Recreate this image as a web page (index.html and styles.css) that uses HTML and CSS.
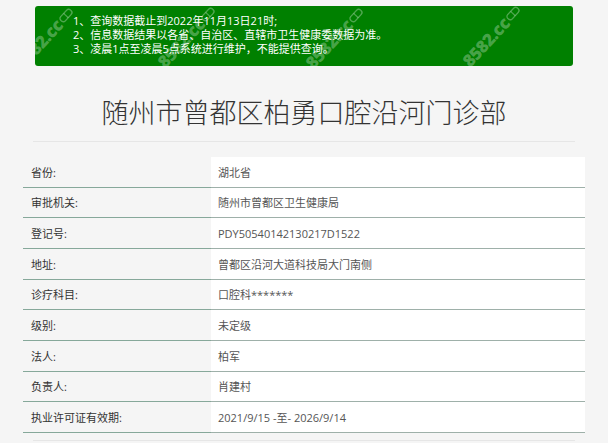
FILE: index.html
```html
<!DOCTYPE html>
<html lang="zh-CN">
<head>
<meta charset="utf-8">
<title>随州市曾都区柏勇口腔沿河门诊部</title>
<link rel="stylesheet" href="styles.css">
</head>
<body>
<div class="page">
  <div class="notice">
    <p>1、查询数据截止到2022年11月13日21时;</p>
    <p>2、信息数据结果以各省、自治区、直辖市卫生健康委数据为准。</p>
    <p>3、凌晨1点至凌晨5点系统进行维护，不能提供查询。</p>
    <span class="wm wm1">8582.cc<svg class="pill" viewBox="0 0 20 10" width="16" height="8"><rect x="1" y="1" width="18" height="8" rx="4" fill="none" stroke="currentColor" stroke-width="1.8"/><line x1="10" y1="1" x2="10" y2="9" stroke="currentColor" stroke-width="1.6"/></svg></span>
    <span class="wm wm2">8582.cc<svg class="pill" viewBox="0 0 20 10" width="16" height="8"><rect x="1" y="1" width="18" height="8" rx="4" fill="none" stroke="currentColor" stroke-width="1.8"/><line x1="10" y1="1" x2="10" y2="9" stroke="currentColor" stroke-width="1.6"/></svg></span>
    <span class="wm wm3">8582.cc<svg class="pill" viewBox="0 0 20 10" width="16" height="8"><rect x="1" y="1" width="18" height="8" rx="4" fill="none" stroke="currentColor" stroke-width="1.8"/><line x1="10" y1="1" x2="10" y2="9" stroke="currentColor" stroke-width="1.6"/></svg></span>
    <span class="wm wm4">8582.cc<svg class="pill" viewBox="0 0 20 10" width="16" height="8"><rect x="1" y="1" width="18" height="8" rx="4" fill="none" stroke="currentColor" stroke-width="1.8"/><line x1="10" y1="1" x2="10" y2="9" stroke="currentColor" stroke-width="1.6"/></svg></span>
  </div>

  <h1 class="title">随州市曾都区柏勇口腔沿河门诊部</h1>

  <div class="info">
    <div class="row"><div class="label">省份:</div><div class="value">湖北省</div></div>
    <div class="row"><div class="label">审批机关:</div><div class="value">随州市曾都区卫生健康局</div></div>
    <div class="row"><div class="label">登记号:</div><div class="value">PDY50540142130217D1522</div></div>
    <div class="row"><div class="label">地址:</div><div class="value">曾都区沿河大道科技局大门南侧</div></div>
    <div class="row"><div class="label">诊疗科目:</div><div class="value">口腔科*******</div></div>
    <div class="row"><div class="label">级别:</div><div class="value">未定级</div></div>
    <div class="row"><div class="label">法人:</div><div class="value">柏军</div></div>
    <div class="row"><div class="label">负责人:</div><div class="value">肖建村</div></div>
    <div class="row"><div class="label">执业许可证有效期:</div><div class="value">2021/9/15 -至- 2026/9/14</div></div>
  </div>

  <div class="next"></div>
</div>
</body>
</html>
```

FILE: styles.css
```css
html, body {
  margin: 0;
  padding: 0;
  background: #f5f5f5;
}

body {
  font-family: "Open Sans", "Noto Sans CJK SC", sans-serif;
  color: #333;
}

.page {
  width: 562px;
  margin: 0 auto;
  padding-top: 6px;
}

.notice {
  position: relative;
  overflow: hidden;
  margin: 0 12px;
  height: 60px;
  box-sizing: border-box;
  padding: 8px 0 0 38px;
  background: #008000;
  border-radius: 3px;
  color: #fff;
  font-size: 11px;
  line-height: 14px;
}

.notice p {
  margin: 0;
  position: relative;
  z-index: 1;
}

.wm {
  position: absolute;
  display: inline-flex;
  align-items: center;
  gap: 1px;
  font-family: "Open Sans", sans-serif;
  font-weight: 800;
  font-size: 17px;
  line-height: 18px;
  letter-spacing: -0.5px;
  color: rgba(255, 255, 255, 0.3);
  transform: translate(-50%, -50%) rotate(-47deg);
  white-space: nowrap;
  z-index: 2;
}

.wm1 { left: 10px;  top: 32px; }
.wm2 { left: 152px; top: 31px; }
.wm3 { left: 300px; top: 32px; }
.wm4 { left: 457px; top: 30px; }

.title {
  margin: 0 10px;
  height: 76px;
  box-sizing: border-box;
  padding-top: 26px;
  border-bottom: 1px solid #e6e6e6;
  text-align: center;
  font-family: "Noto Sans CJK SC", sans-serif;
  font-size: 27px;
  line-height: 40px;
  font-weight: 300;
  color: #333;
}

.info {
  margin-top: 15px;
}

.row {
  display: grid;
  grid-template-columns: 188px 1fr;
  height: 30.67px;
  font-size: 11px;
}

.label,
.value {
  display: flex;
  align-items: center;
  box-sizing: border-box;
  padding-left: 8px;
  border-bottom: 1px solid #86a89a;
}

.label {
  color: #333;
}

.value {
  background: #fff;
  padding-left: 7px;
  color: #555;
  border-bottom-color: #9eb0a9;
}

.next {
  margin: 7px 10px 0;
  border-top: 1px solid #e6e6e6;
  height: 20px;
}
```
